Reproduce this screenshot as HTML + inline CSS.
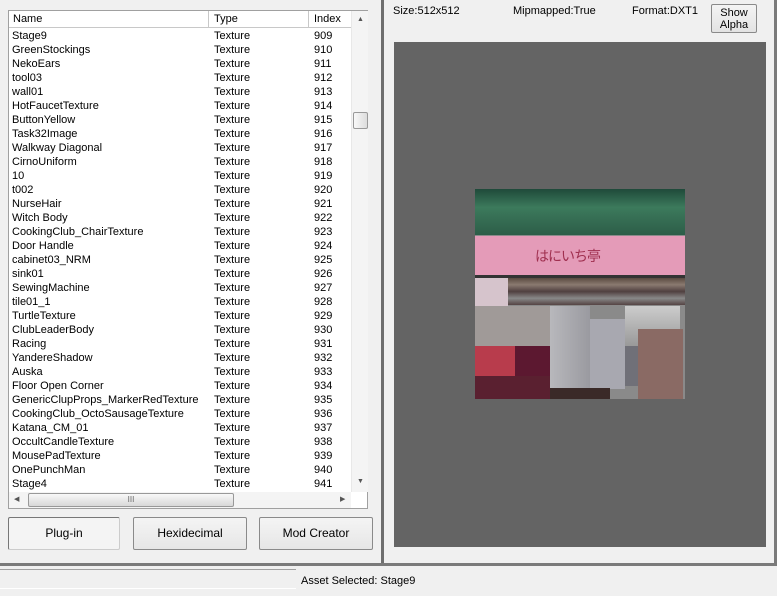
<!DOCTYPE html>
<html><head><meta charset="utf-8"><style>
*{box-sizing:border-box;margin:0;padding:0}
body{width:777px;height:596px;background:#f0f0f0;font-family:"Liberation Sans",Tahoma,sans-serif;font-size:11px;color:#000;position:relative;overflow:hidden}
.abs{position:absolute}
.list{left:8px;top:10px;width:360px;height:499px;border:1px solid #a0a0a0;background:#fff}
.hdr{left:0;top:0;width:342px;height:17px;border-bottom:1px solid #c8c8c8;background:#fff}
.hdr div{position:absolute;top:2px}
.row{position:absolute;height:14px;left:0;width:342px}
.row span{position:absolute;top:0}
.btn{top:517px;height:33px;border:1px solid #8a8a8a;background:linear-gradient(#f4f4f4,#e6e6e6);text-align:center;line-height:31px;font-size:12px;border-radius:2px}
</style></head><body>
<div class="abs list">
 <div class="abs hdr">
  <div style="left:4px">Name</div>
  <div style="left:199px;width:1px;height:17px;top:0;background:#c8c8c8"></div>
  <div style="left:205px">Type</div>
  <div style="left:299px;width:1px;height:17px;top:0;background:#c8c8c8"></div>
  <div style="left:305px">Index</div>
 </div>
 <div class="abs" style="left:342px;top:0;width:17px;height:481px;background:#f4f4f4;border-left:1px solid #e8e8e8">
  <div class="abs" style="left:5px;top:5px;font-size:7px;color:#555">▲</div>
  <div class="abs" style="left:1px;top:101px;width:15px;height:17px;border:1px solid #999;background:linear-gradient(90deg,#f8f8f8,#ddd);border-radius:2px"></div>
  <div class="abs" style="left:5px;top:467px;font-size:7px;color:#555">▼</div>
 </div>
 <div class="abs" style="left:0;top:481px;width:342px;height:16px;background:#f4f4f4">
  <div class="abs" style="left:5px;top:3px;font-size:7px;color:#555">◀</div>
  <div class="abs" style="left:19px;top:1px;width:206px;height:14px;border:1px solid #999;background:linear-gradient(#f8f8f8,#d8d8d8);border-radius:2px;text-align:center;font-size:8px;line-height:12px;color:#666">III</div>
  <div class="abs" style="left:331px;top:3px;font-size:7px;color:#555">▶</div>
 </div>
 <div id="rows"></div>
</div>
<div class="abs btn" style="left:8px;width:112px;background:#f4f4f4;border-color:#777 #ccc #ccc #777">Plug-in</div>
<div class="abs btn" style="left:133px;width:114px">Hexidecimal</div>
<div class="abs btn" style="left:259px;width:114px">Mod Creator</div>
<div class="abs" style="left:381px;top:0;width:3px;height:566px;background:#6e6e6e"></div>
<div class="abs" style="left:0;top:563px;width:777px;height:3px;background:#7a7a7a"></div>
<div class="abs" style="left:774px;top:0;width:3px;height:566px;background:#7a7a7a"></div>
<div class="abs" style="left:393px;top:5px">Size:512x512</div>
<div class="abs" style="left:513px;top:5px">Mipmapped:True</div>
<div class="abs" style="left:632px;top:5px">Format:DXT1</div>
<div class="abs" style="left:711px;top:4px;width:46px;height:29px;border:1px solid #8a8a8a;background:linear-gradient(#f4f4f4,#e3e3e3);text-align:center;line-height:12px;padding-top:2px;border-radius:2px">Show<br>Alpha</div>
<div class="abs" style="left:394px;top:42px;width:372px;height:505px;background:#646464"></div>
<div class="abs" style="left:475px;top:189px;width:210px;height:210px;background:#8a8a8a;overflow:hidden">
 <div class="abs" style="left:0;top:0;width:210px;height:46px;background:linear-gradient(#1f4a3a,#3c7a5c 40%,#2d5d48)"></div>
 <div class="abs" style="left:0;top:47px;width:210px;height:39px;background:#e49bb8"></div>
 <div class="abs" style="left:60px;top:58px;width:98px;height:18px;color:#a03050;font-size:14px;line-height:18px;font-family:'Noto Sans CJK JP',sans-serif;letter-spacing:-1px">はにいち亭</div>
 <div class="abs" style="left:0;top:86px;width:210px;height:3px;background:#333"></div>
 <div class="abs" style="left:33px;top:89px;width:177px;height:27px;background:linear-gradient(#5a4a40,#8a7a70,#504040,#888,#544)"></div>
 <div class="abs" style="left:0;top:89px;width:33px;height:28px;background:#d6c4cc"></div>
 <div class="abs" style="left:0;top:117px;width:75px;height:40px;background:#a09a98"></div>
 <div class="abs" style="left:0;top:157px;width:40px;height:30px;background:#b83c4c"></div>
 <div class="abs" style="left:40px;top:157px;width:35px;height:30px;background:#5c1830"></div>
 <div class="abs" style="left:0;top:187px;width:75px;height:23px;background:#5a2030"></div>
 <div class="abs" style="left:75px;top:117px;width:40px;height:82px;background:linear-gradient(90deg,#b8b8bc,#9a9aa0)"></div>
 <div class="abs" style="left:115px;top:130px;width:35px;height:70px;background:#a8a8b0"></div>
 <div class="abs" style="left:150px;top:117px;width:55px;height:40px;background:linear-gradient(#ccc,#999)"></div>
 <div class="abs" style="left:150px;top:157px;width:20px;height:40px;background:#707078"></div>
 <div class="abs" style="left:163px;top:140px;width:45px;height:70px;background:#8a6a64"></div>
 <div class="abs" style="left:75px;top:199px;width:60px;height:11px;background:#3a2a28"></div>
</div>
<div class="abs" style="left:0;top:569px;width:296px;height:20px;border-top:1px solid #a0a0a0;border-bottom:1px solid #fff"></div>
<div class="abs" style="left:301px;top:575px">Asset Selected: Stage9</div>
<script>
var d=[["Stage9"],["GreenStockings"],["NekoEars"],["tool03"],["wall01"],["HotFaucetTexture"],["ButtonYellow"],["Task32Image"],["Walkway Diagonal"],["CirnoUniform"],["10"],["t002"],["NurseHair"],["Witch Body"],["CookingClub_ChairTexture"],["Door Handle"],["cabinet03_NRM"],["sink01"],["SewingMachine"],["tile01_1"],["TurtleTexture"],["ClubLeaderBody"],["Racing"],["YandereShadow"],["Auska"],["Floor Open Corner"],["GenericClupProps_MarkerRedTexture"],["CookingClub_OctoSausageTexture"],["Katana_CM_01"],["OccultCandleTexture"],["MousePadTexture"],["OnePunchMan"],["Stage4"]];
var h="";for(var i=0;i<d.length;i++){h+='<div class="row" style="top:'+(19+i*14)+'px"><span style="left:3px">'+d[i][0]+'</span><span style="left:205px">Texture</span><span style="left:305px">'+(909+i)+'</span></div>';}
document.getElementById("rows").innerHTML=h;
</script>
</body></html>
